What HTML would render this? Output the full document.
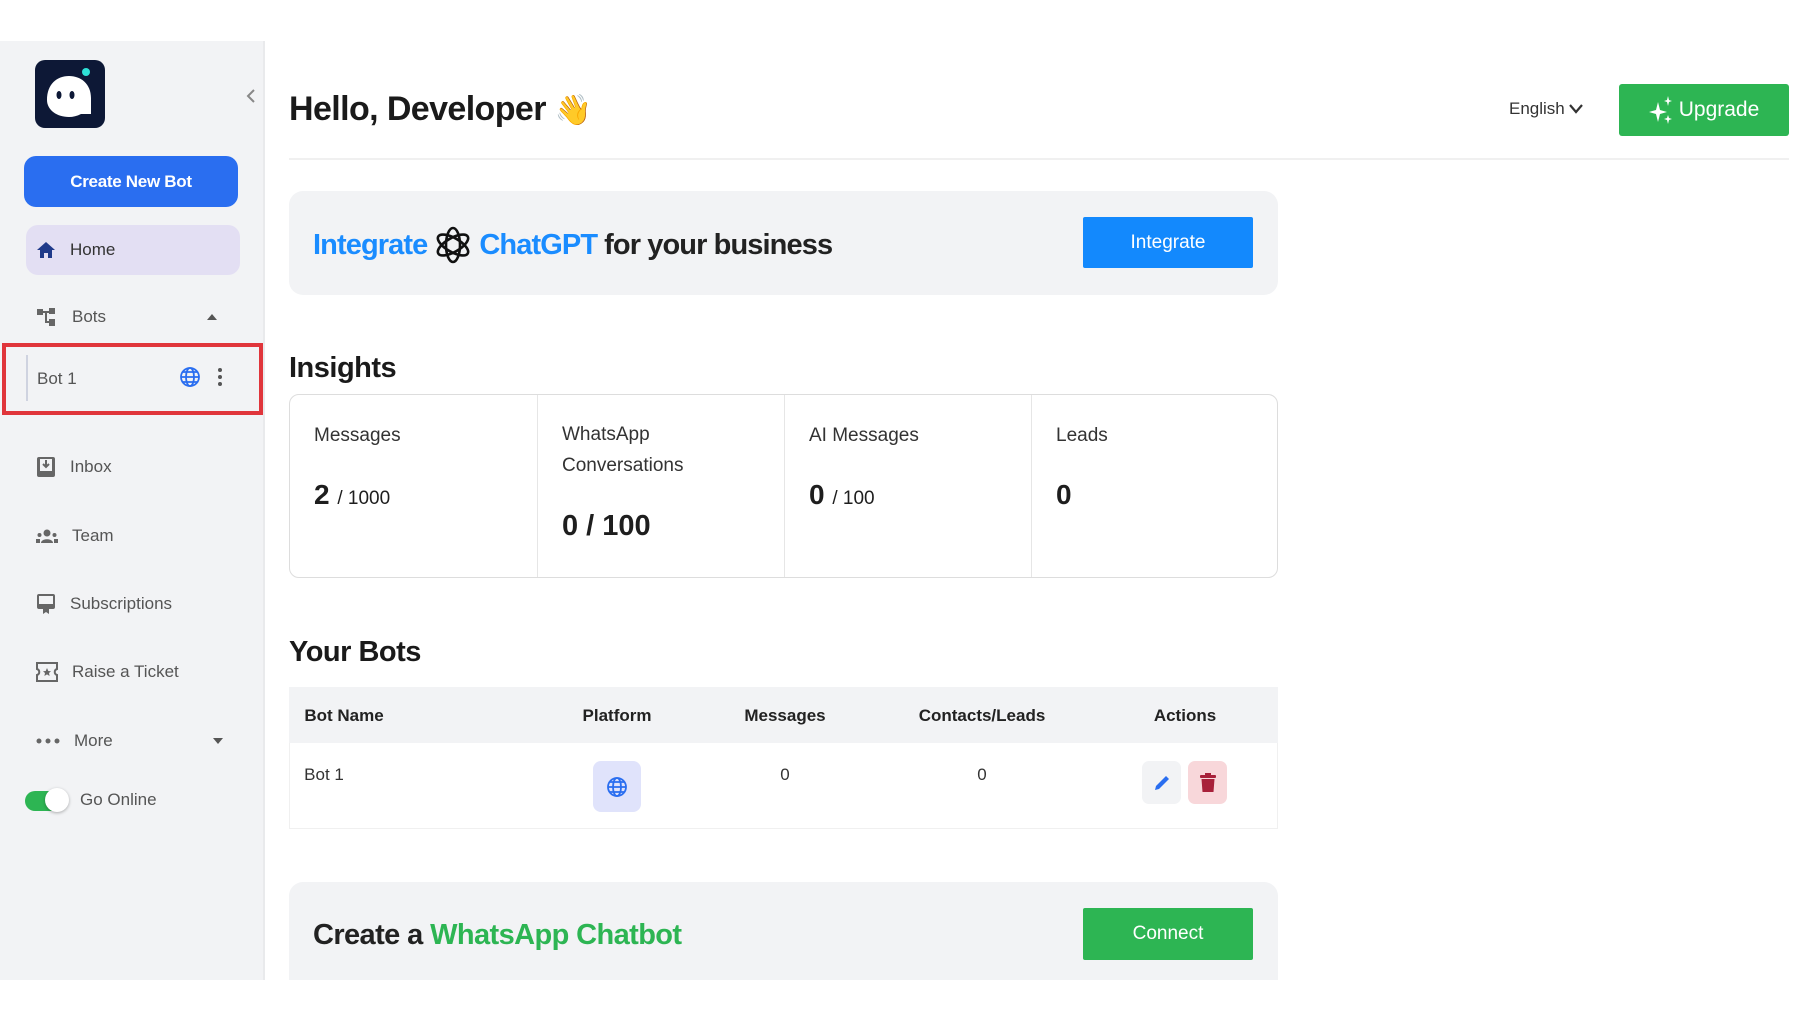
<!DOCTYPE html>
<html><head><meta charset="utf-8"><style>
*{margin:0;padding:0;box-sizing:border-box}
body{width:1806px;height:1020px;background:#fff;font-family:"Liberation Sans",Arial,sans-serif;position:relative;overflow:hidden;color:#1e1e1e}
.a{position:absolute}
#side{left:0;top:41px;width:265px;height:939px;background:#f2f3f5;border-right:2px solid #e9eaec}
.nav{position:absolute;left:36px;font-size:17px;color:#555;display:flex;align-items:center;transform:translateY(-50%)}
.nav svg{margin-right:14px}
.lbl{font-size:19px;color:#333}
.cell{position:absolute;top:0;height:100%;border-left:1px solid #e6e6e6;padding:30px 24px}
.th{position:absolute;top:716px;transform:translate(-50%,-50%);font-size:17px;font-weight:bold;color:#222}
.td{position:absolute;top:775px;transform:translate(-50%,-50%);font-size:17px;color:#333}
</style></head><body>
<div id="side" class="a"></div>
<div class="a" style="left:35px;top:60px;width:70px;height:68px;background:#0d1836;border-radius:10px">
<svg width="70" height="68" viewBox="0 0 70 68"><path d="M12 40 C12 24 22 16 34 16 C46 16 56 24 56 38 L56 54 L46 54 C42 56 38 57 34 57 C22 57 12 50 12 40Z" fill="#fff"/><ellipse cx="24" cy="35" rx="2.5" ry="4" fill="#0d1836"/><ellipse cx="37" cy="35" rx="2.5" ry="4" fill="#0d1836"/><circle cx="51" cy="12" r="4" fill="#2ee0d6"/></svg></div>
<svg class="a" style="left:245px;top:88px" width="12" height="16" viewBox="0 0 12 16"><path d="M9 2 L3 8 L9 14" stroke="#888" stroke-width="2" fill="none"/></svg>
<div class="a" style="left:24px;top:156px;width:214px;height:51px;background:#2a6ef0;border-radius:12px;color:#fff;font-weight:bold;font-size:17px;letter-spacing:-0.3px;display:flex;align-items:center;justify-content:center">Create New Bot</div>
<div class="a" style="left:26px;top:225px;width:214px;height:50px;background:#e3dff3;border-radius:12px"></div>
<div class="nav" style="top:250px;color:#333"><svg width="20" height="20" viewBox="0 0 20 20"><path d="M10 2 L1 10 H4 V18 H8 V13 H12 V18 H16 V10 H19Z" fill="#1f3a8a"/></svg>Home</div>
<div class="nav" style="top:317px"><svg width="22" height="20" viewBox="0 0 22 20"><rect x="1" y="2" width="6" height="6" fill="#666"/><rect x="13" y="1" width="6" height="6" fill="#666"/><rect x="13" y="12" width="6" height="7" fill="#666"/><path d="M7 5 H13 M10 5 V15 H13" stroke="#666" stroke-width="2" fill="none"/></svg>Bots</div>
<svg class="a" style="left:207px;top:313px" width="10" height="7"><path d="M0 7 L5 1 L10 7Z" fill="#555"/></svg>
<div class="a" style="left:2px;top:343px;width:261px;height:72px;border:4px solid #e0353b"></div>
<div class="a" style="left:26px;top:355px;width:2px;height:46px;background:#cfd3e0"></div>
<div class="nav" style="top:379px;left:37px;font-size:17px;color:#555">Bot 1</div>
<svg class="a" style="left:179px;top:366px" width="22" height="22" viewBox="0 0 22 22"><g stroke="#2a6ef0" stroke-width="1.8" fill="none"><circle cx="11" cy="11" r="9"/><ellipse cx="11" cy="11" rx="4" ry="9"/><path d="M2 11 H20 M4 6 H18 M4 16 H18"/></g></svg>
<svg class="a" style="left:217px;top:367px" width="6" height="20"><circle cx="3" cy="3" r="2" fill="#555"/><circle cx="3" cy="10" r="2" fill="#555"/><circle cx="3" cy="17" r="2" fill="#555"/></svg>
<div class="nav" style="top:467px"><svg width="20" height="22" viewBox="0 0 20 22"><rect x="1" y="1" width="18" height="20" rx="2" fill="#666"/><rect x="4" y="3" width="12" height="12" fill="#f2f3f5"/><path d="M10 4 V11 M7 8 L10 11 L13 8" stroke="#666" stroke-width="2" fill="none"/></svg>Inbox</div>
<div class="nav" style="top:536px"><svg width="22" height="16" viewBox="0 0 22 16"><circle cx="11" cy="5" r="3.5" fill="#666"/><path d="M5 15 C5 10 17 10 17 15Z" fill="#666"/><circle cx="3.5" cy="7" r="2" fill="#666"/><circle cx="18.5" cy="7" r="2" fill="#666"/><rect x="0" y="11" width="4" height="4" fill="#666"/><rect x="18" y="11" width="4" height="4" fill="#666"/></svg>Team</div>
<div class="nav" style="top:604px"><svg width="20" height="22" viewBox="0 0 20 22"><rect x="1" y="1" width="18" height="15" rx="2" fill="#666"/><rect x="3" y="3" width="14" height="8" fill="#f2f3f5"/><path d="M7 16 V21 L10 19 L13 21 V16Z" fill="#666"/></svg>Subscriptions</div>
<div class="nav" style="top:672px"><svg width="22" height="20" viewBox="0 0 22 20"><path d="M1 1 H21 V7 C18 8 18 12 21 13 V19 H1 V13 C4 12 4 8 1 7Z" stroke="#666" stroke-width="2" fill="none"/><path d="M11 6 L12.3 9 L15 9.2 L13 11 L13.6 14 L11 12.4 L8.4 14 L9 11 L7 9.2 L9.7 9Z" fill="#666"/></svg>Raise a Ticket</div>
<div class="nav" style="top:741px"><svg width="24" height="6"><circle cx="3" cy="3" r="2.5" fill="#666"/><circle cx="12" cy="3" r="2.5" fill="#666"/><circle cx="21" cy="3" r="2.5" fill="#666"/></svg>More</div>
<svg class="a" style="left:213px;top:738px" width="10" height="7"><path d="M0 0 L5 6 L10 0Z" fill="#555"/></svg>
<div class="a" style="left:25px;top:791px;width:42px;height:20px;background:#2db553;border-radius:10px"></div>
<div class="a" style="left:45px;top:788px;width:24px;height:24px;background:#fff;border-radius:50%;box-shadow:0 1px 3px rgba(0,0,0,.3)"></div>
<div class="a" style="left:80px;top:790px;font-size:17px;color:#555">Go Online</div>

<div class="a" style="left:289px;top:90px;font-size:34px;font-weight:bold;color:#1a1a1a;letter-spacing:-0.6px">Hello, Developer <span style="font-size:30px">👋</span></div>
<div class="a" style="left:1509px;top:99px;font-size:17px;color:#333">English</div>
<svg class="a" style="left:1569px;top:104px" width="14" height="10"><path d="M1 1 L7 8 L13 1" stroke="#333" stroke-width="2.2" fill="none"/></svg>
<div class="a" style="left:1619px;top:84px;width:170px;height:52px;background:#2db553;border-radius:3px;color:#fff;font-size:21px;display:flex;align-items:center;justify-content:center"><svg width="26" height="28" viewBox="0 0 26 28" style="margin-right:4px"><path d="M9 6 L11 14 L18 16 L11 18 L9 26 L7 18 L0 16 L7 14Z" fill="#fff"/><path d="M19 0 L20 4 L23 5 L20 6 L19 10 L18 6 L15 5 L18 4Z" fill="#fff"/><path d="M19 19 L20 22 L23 23 L20 24 L19 28 L18 24 L15 23 L18 22Z" fill="#fff"/></svg>Upgrade</div>
<div class="a" style="left:289px;top:158px;width:1500px;height:2px;background:#f0f0f0"></div>

<div class="a" style="left:289px;top:191px;width:989px;height:104px;background:#f2f3f5;border-radius:14px"></div>
<div class="a" style="left:313px;top:223px;font-size:29px;font-weight:bold;color:#1a8cff;display:flex;align-items:center;letter-spacing:-0.9px">Integrate
<svg width="40" height="44" viewBox="0 0 40 44" style="margin:0 6px"><g stroke="#111" stroke-width="2.6" fill="none"><ellipse cx="20" cy="22" rx="7" ry="17"/><ellipse cx="20" cy="22" rx="7" ry="17" transform="rotate(60 20 22)"/><ellipse cx="20" cy="22" rx="7" ry="17" transform="rotate(-60 20 22)"/></g></svg>ChatGPT <span style="color:#222;margin-left:7px">for your business</span></div>
<div class="a" style="left:1083px;top:217px;width:170px;height:51px;background:#1389fd;border-radius:2px;color:#fff;font-size:19px;display:flex;align-items:center;justify-content:center">Integrate</div>

<div class="a" style="left:289px;top:352px;font-size:29px;font-weight:bold;color:#1a1a1a;letter-spacing:-0.5px">Insights</div>
<div class="a" style="left:289px;top:394px;width:989px;height:184px;border:1.5px solid #ddd;border-radius:10px;overflow:hidden">
<div class="cell" style="left:0;border:none;width:247px"><div class="lbl">Messages</div><div style="margin-top:32px;font-size:28px;font-weight:bold">2 <span style="font-size:19px;font-weight:normal">/ 1000</span></div></div>
<div class="cell" style="left:247px;width:247px"><div class="lbl" style="line-height:31px;margin-top:-6px">WhatsApp<br>Conversations</div><div style="margin-top:29px;font-size:29px;font-weight:bold">0 / 100</div></div>
<div class="cell" style="left:494px;width:247px"><div class="lbl">AI Messages</div><div style="margin-top:32px;font-size:28px;font-weight:bold">0 <span style="font-size:19px;font-weight:normal">/ 100</span></div></div>
<div class="cell" style="left:741px;width:248px"><div class="lbl">Leads</div><div style="margin-top:32px;font-size:28px;font-weight:bold">0</div></div>
</div>

<div class="a" style="left:289px;top:636px;font-size:29px;font-weight:bold;color:#1a1a1a;letter-spacing:-0.5px">Your Bots</div>
<div class="a" style="left:289px;top:687px;width:989px;height:56px;background:#f2f3f5"></div>
<div class="a" style="left:289px;top:743px;width:989px;height:86px;border:1px solid #f0f0f0;border-top:none"></div>
<div class="th" style="left:344px">Bot Name</div>
<div class="th" style="left:617px">Platform</div>
<div class="th" style="left:785px">Messages</div>
<div class="th" style="left:982px">Contacts/Leads</div>
<div class="th" style="left:1185px">Actions</div>
<div class="td" style="left:324px">Bot 1</div>
<div class="td" style="left:785px">0</div>
<div class="td" style="left:982px">0</div>
<div class="a" style="left:593px;top:761px;width:48px;height:51px;background:#e0e3fb;border-radius:8px;display:flex;align-items:center;justify-content:center"><svg width="22" height="22" viewBox="0 0 22 22"><g stroke="#2a6ef0" stroke-width="1.8" fill="none"><circle cx="11" cy="11" r="9"/><ellipse cx="11" cy="11" rx="4" ry="9"/><path d="M2 11 H20 M4 6 H18 M4 16 H18"/></g></svg></div>
<div class="a" style="left:1142px;top:761px;width:39px;height:43px;background:#f2f3f5;border-radius:7px;display:flex;align-items:center;justify-content:center"><svg width="20" height="20" viewBox="0 0 20 20"><path d="M3 17 L4 13 L14 3 L17 6 L7 16Z" fill="#2a6ef0"/></svg></div>
<div class="a" style="left:1188px;top:761px;width:39px;height:43px;background:#f8d7da;border-radius:7px;display:flex;align-items:center;justify-content:center"><svg width="16" height="20" viewBox="0 0 16 20"><rect x="0" y="2" width="16" height="3" rx="1" fill="#a8213a"/><rect x="5" y="0" width="6" height="3" fill="#a8213a"/><path d="M1.5 6 H14.5 L13.5 19 H2.5Z" fill="#a8213a"/></svg></div>

<div class="a" style="left:289px;top:882px;width:989px;height:98px;background:#f2f3f5;border-radius:14px 14px 0 0"></div>
<div class="a" style="left:313px;top:919px;font-size:29px;font-weight:bold;color:#222;letter-spacing:-0.6px">Create a <span style="color:#2db553">WhatsApp Chatbot</span></div>
<div class="a" style="left:1083px;top:908px;width:170px;height:52px;background:#2db553;border-radius:2px;color:#fff;font-size:19px;display:flex;align-items:center;justify-content:center">Connect</div>
<div class="a" style="left:0;top:980px;width:1806px;height:40px;background:#fff"></div>
</body></html>
